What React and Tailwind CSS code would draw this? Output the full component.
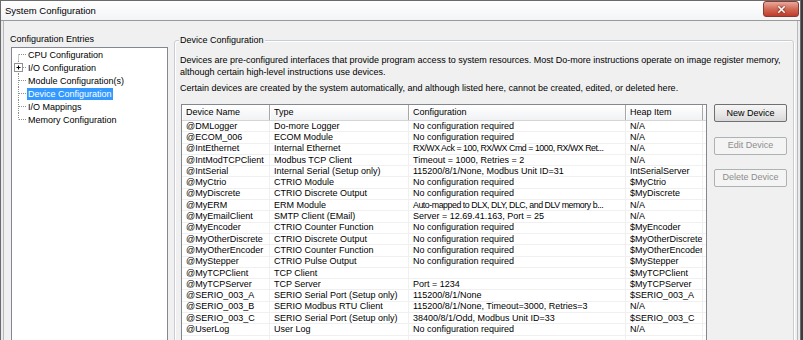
import { X } from "lucide-react";

const entries = [
  { label: "CPU Configuration", first: true },
  { label: "I/O Configuration", expandable: true },
  { label: "Module Configuration(s)" },
  { label: "Device Configuration", selected: true },
  { label: "I/O Mappings" },
  { label: "Memory Configuration", last: true },
];

const devices = [
  ["@DMLogger", "Do-more Logger", "No configuration required", "N/A"],
  ["@ECOM_006", "ECOM Module", "No configuration required", "N/A"],
  ["@IntEthernet", "Internal Ethernet", "RX/WX Ack = 100, RX/WX Cmd = 1000, RX/WX Ret...", "N/A"],
  ["@IntModTCPClient", "Modbus TCP Client", "Timeout = 1000, Retries = 2", "N/A"],
  ["@IntSerial", "Internal Serial (Setup only)", "115200/8/1/None, Modbus Unit ID=31", "IntSerialServer"],
  ["@MyCtrio", "CTRIO Module", "No configuration required", "$MyCtrio"],
  ["@MyDiscrete", "CTRIO Discrete Output", "No configuration required", "$MyDiscrete"],
  ["@MyERM", "ERM Module", "Auto-mapped to DLX, DLY, DLC, and DLV memory b...", "N/A"],
  ["@MyEmailClient", "SMTP Client (EMail)", "Server = 12.69.41.163, Port = 25", "N/A"],
  ["@MyEncoder", "CTRIO Counter Function", "No configuration required", "$MyEncoder"],
  ["@MyOtherDiscrete", "CTRIO Discrete Output", "No configuration required", "$MyOtherDiscrete"],
  ["@MyOtherEncoder", "CTRIO Counter Function", "No configuration required", "$MyOtherEncoder"],
  ["@MyStepper", "CTRIO Pulse Output", "No configuration required", "$MyStepper"],
  ["@MyTCPClient", "TCP Client", "", "$MyTCPClient"],
  ["@MyTCPServer", "TCP Server", "Port = 1234", "$MyTCPServer"],
  ["@SERIO_003_A", "SERIO Serial Port (Setup only)", "115200/8/1/None", "$SERIO_003_A"],
  ["@SERIO_003_B", "SERIO Modbus RTU Client", "115200/8/1/None, Timeout=3000, Retries=3", "N/A"],
  ["@SERIO_003_C", "SERIO Serial Port (Setup only)", "38400/8/1/Odd, Modbus Unit ID=33", "$SERIO_003_C"],
  ["@UserLog", "User Log", "No configuration required", "N/A"],
  ["", "", "", ""],
];

const headers = ["Device Name", "Type", "Configuration", "Heap Item", ""];

function TreeLines({ entry }) {
  const top = entry.first ? 6.5 : 0;
  const bottom = entry.last ? 6.5 : 13;
  return (
    <svg width="15" height="13" className="shrink-0">
      <line x1="6.5" y1={top} x2="6.5" y2={bottom} stroke="#8f8f8f" strokeDasharray="1 1" />
      <line x1={entry.expandable ? 11 : 7} y1="6.5" x2="15" y2="6.5" stroke="#8f8f8f" strokeDasharray="1 1" />
      {entry.expandable && (
        <g>
          <rect x="2.5" y="2.5" width="8" height="8" fill="#fff" stroke="#919191" />
          <line x1="4.5" y1="6.5" x2="8.5" y2="6.5" stroke="#000" />
          <line x1="6.5" y1="4.5" x2="6.5" y2="8.5" stroke="#000" />
        </g>
      )}
    </svg>
  );
}

function WinButton({ children, disabled }) {
  return (
    <button
      type="button"
      className={
        disabled
          ? "h-[18px] w-[73px] rounded-[2px] border border-[#adb2b5] bg-[#f4f4f4] text-[9px] leading-none text-[#8d8d8d]"
          : "h-[18px] w-[73px] rounded-[2px] border border-[#707070] bg-gradient-to-b from-[#f6f6f6] via-[#e9e9e9] to-[#d8d8d8] text-[9px] leading-none text-black"
      }
    >
      {children}
    </button>
  );
}

export default function App() {
  return (
    <div className="h-[340px] w-[803px] overflow-hidden bg-[#3c3c3c] font-['Liberation_Sans',Arial,sans-serif] text-black">
      <div className="flex h-[340px] w-[801px] flex-col border-l border-r border-t border-[#6b6b6b] bg-[#e9ebee]">
        <div className="flex h-[20px] shrink-0 items-start border-b border-[#9a9a9a] bg-gradient-to-b from-[#ffffff] to-[#f3f4f6]">
          <span className="ml-[4px] mt-[4px] text-[9.5px] leading-[12px] text-black">System Configuration</span>
          <div className="ml-auto mr-[1px] flex h-[16px] w-[36px] items-center justify-center rounded-[3px] border border-[#8a3a30] bg-gradient-to-b from-[#e8a99c] via-[#d16a55] to-[#c0392b]">
            <X size={11} strokeWidth={3.2} className="text-white drop-shadow-[0_0_1px_#5a1a12]" />
          </div>
        </div>

        <div className="mx-[2px] flex flex-1 items-start border-l border-r border-[#b9b9b9] bg-[#f0f0f0]">
          <div className="flex flex-col pl-[6px] pt-[12px]">
            <span className="text-[9px] leading-[12px]">Configuration Entries</span>
            <div className="ml-[1px] mt-[2px] h-[300px] w-[157px] border border-[#828790] bg-white">
              {entries.map((entry) => (
                <div key={entry.label} className="flex h-[13px] items-center">
                  <TreeLines entry={entry} />
                  <span
                    className={
                      entry.selected
                        ? "bg-[#3399ff] px-[1px] text-[9px] leading-[12px] text-white"
                        : "px-[1px] text-[9px] leading-[12px]"
                    }
                  >
                    {entry.label}
                  </span>
                </div>
              ))}
            </div>
          </div>

          <div className="relative ml-[6px] mt-[19px] h-[320px] w-[620px] rounded-[3px] border border-[#c8cdd2] pl-[5px] pt-[13px] shadow-[inset_1px_1px_0_#fff,1px_1px_0_#fff]">
            <span className="absolute left-[4px] top-[-7px] bg-[#f0f0f0] px-[1px] text-[9px] leading-[12px]">
              Device Configuration
            </span>
            <p className="text-[9px] leading-[12px]">
              Devices are pre-configured interfaces that provide program access to system resources. Most Do-more instructions operate on image register memory,
              <br />
              although certain high-level instructions use devices.
            </p>
            <p className="mt-[4px] text-[9px] leading-[12px]">
              Certain devices are created by the system automatically, and although listed here, cannot be created, edited, or deleted here.
            </p>

            <div className="ml-[1px] mt-[10px] flex items-start">
              <div className="h-[240px] w-[526px] overflow-hidden border border-[#828790] bg-white">
                <div className="grid h-[16px] grid-cols-[88px_139px_217px_77px_1fr] border-b border-[#d5d5d5] bg-gradient-to-b from-[#ffffff] to-[#f1f2f4]">
                  {headers.map((h, i) => (
                    <div
                      key={i}
                      className={
                        i < 4
                          ? "flex items-center whitespace-nowrap border-r border-[#a8a8a8] pl-[4px] text-[9px] leading-none shadow-[inset_1px_0_0_#fff]"
                          : "flex items-center"
                      }
                    >
                      {h}
                    </div>
                  ))}
                </div>
                {devices.map((row, r) => (
                  <div key={r} className="grid h-[11.3px] grid-cols-[88px_139px_217px_77px_1fr] border-b border-[#f0f0f0]">
                    {row.map((cell, c) => (
                      <div
                        key={c}
                        className={
                          cell.endsWith("...")
                            ? "flex items-center overflow-hidden whitespace-nowrap border-r border-[#f0f0f0] pl-[4px] text-[8.8px] leading-none tracking-[-0.45px]"
                            : "flex items-center overflow-hidden whitespace-nowrap border-r border-[#f0f0f0] pl-[4px] text-[9px] leading-none"
                        }
                      >
                        {cell}
                      </div>
                    ))}
                    <div />
                  </div>
                ))}
              </div>

              <div className="ml-[7px] flex flex-col">
                <WinButton>New Device</WinButton>
                <div className="mt-[9px]">
                  <WinButton disabled>Edit Device</WinButton>
                </div>
                <div className="mt-[8px]">
                  <WinButton disabled>Delete Device</WinButton>
                </div>
              </div>
            </div>
          </div>
        </div>
      </div>
    </div>
  );
}
